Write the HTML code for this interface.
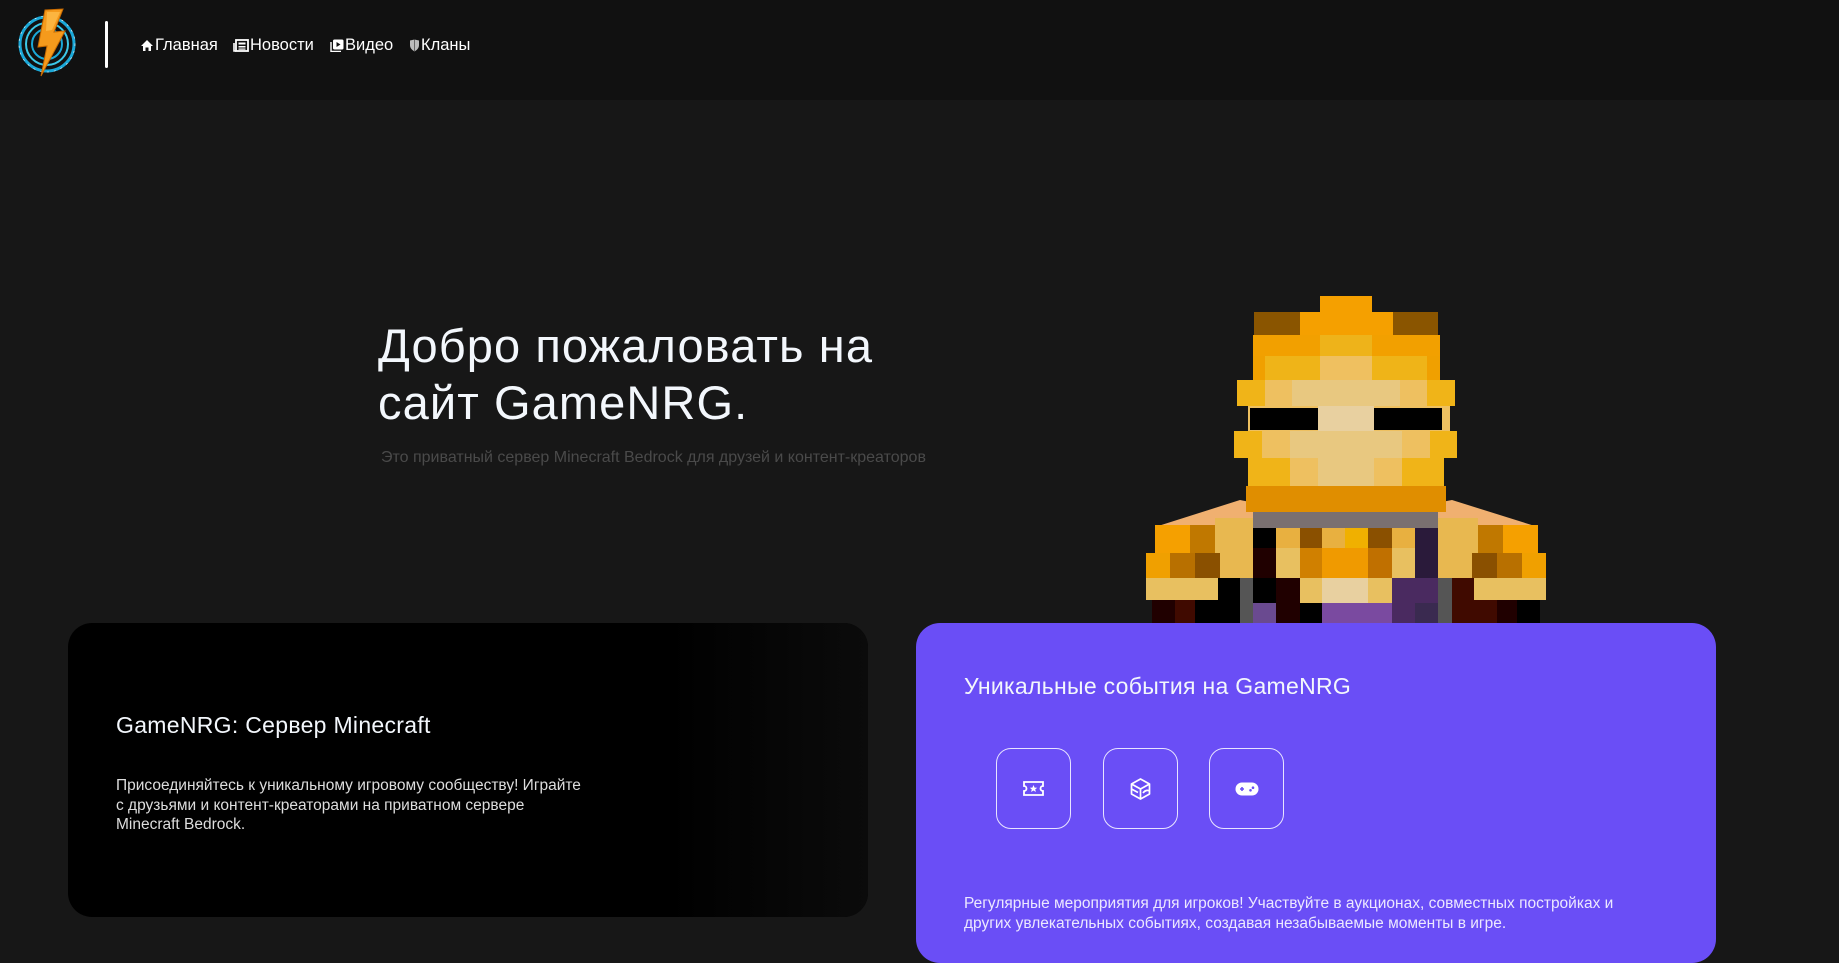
<!DOCTYPE html>
<html><head><meta charset="utf-8">
<style>
*{margin:0;padding:0;box-sizing:border-box}
html,body{width:1839px;height:945px;overflow:hidden;background:#171717;font-family:"Liberation Sans",Arial,sans-serif;color:#fff}
.hdr{position:absolute;left:0;top:0;width:1839px;height:100px;background:#111}
.div{position:absolute;left:105px;top:21px;width:3px;height:47px;background:#fff;border-radius:2px}
.nav{position:absolute;top:36px;font-size:16.5px;font-weight:500;display:flex;align-items:center;color:#fff}
.nav svg{margin-right:1px}
h1{position:absolute;left:378px;top:317px;font-size:47px;font-weight:500;line-height:57px;color:#f3f7fc;letter-spacing:1.1px}
.sub{position:absolute;left:381px;top:449px;font-size:16px;color:#4a4a4a;font-weight:300}
.card1{position:absolute;left:68px;top:623px;width:800px;height:294px;background:#000;border-radius:24px;overflow:hidden}
.card2{position:absolute;left:916px;top:623px;width:800px;height:340px;background:#6a4ef6;border-radius:24px}
.t{position:absolute;font-size:23px;font-weight:500;color:#f3f7fc;letter-spacing:0.3px}
.p{position:absolute;font-size:15.5px;line-height:19.5px;color:#ddd;font-weight:300}
.ib{position:absolute;top:125px;width:75px;height:81px;border:1.3px solid #e8e4ff;border-radius:15px;display:flex;align-items:center;justify-content:center}
</style></head><body>
<div class="hdr">
<svg style="position:absolute;left:16px;top:6px" width="66" height="72" viewBox="0 0 66 72">
<circle cx="31" cy="38" r="27" fill="none" stroke="#1aa8d8" stroke-width="3"/>
<circle cx="31" cy="38" r="21" fill="none" stroke="#3cc8e8" stroke-width="2"/>
<circle cx="31" cy="38" r="15" fill="none" stroke="#1aa8d8" stroke-width="2"/>
<circle cx="31" cy="38" r="28" fill="none" stroke="#fff" stroke-width="0.6" stroke-dasharray="2 5"/>
<path d="M29 4 L47 3 L38 26 L49 25 L25 70 L31 40 L22 41 Z" fill="#f59a1c" stroke="#c86a00" stroke-width="1"/>
<path d="M31 6 L44 6 L36 24 L30 25 Z" fill="#ffc050" opacity=".7"/>
</svg>
<div class="div"></div>
<div class="nav" style="left:140px"><svg width="14" height="13" viewBox="0 0 14 13"><path d="M7 1 L13 7 H11 V12 H8.5 V8.5 H5.5 V12 H3 V7 H1 Z" fill="#fff"/></svg>Главная</div>
<div class="nav" style="left:233px"><svg width="16" height="13" viewBox="0 0 16 13"><rect x="3" y="1" width="12" height="11" fill="none" stroke="#fff" stroke-width="1.8"/><path d="M1 4 V12 H3" fill="none" stroke="#fff" stroke-width="1.6"/><rect x="5.5" y="3.5" width="7" height="2" fill="#fff"/><rect x="5.5" y="7" width="7" height="1.5" fill="#fff"/><rect x="5.5" y="9.5" width="7" height="1.2" fill="#fff"/></svg>Новости</div>
<div class="nav" style="left:330px"><svg width="14" height="13" viewBox="0 0 14 13"><rect x="3" y="0.5" width="10.5" height="10" rx="1.5" fill="#fff"/><path d="M1 3 V12.5 H11" fill="none" stroke="#fff" stroke-width="1.4"/><path d="M6.5 3 L10.5 5.5 L6.5 8 Z" fill="#111"/></svg>Видео</div>
<div class="nav" style="left:409px"><svg width="11" height="13" viewBox="0 0 11 13"><path d="M1 1.5 L5.5 0.5 L10 1.5 V6 C10 9 8 11 5.5 12.5 C3 11 1 9 1 6 Z" fill="#bbb"/><path d="M5.5 0.5 V12.5" stroke="#666" stroke-width="1"/></svg>Кланы</div>
</div>

<h1>Добро пожаловать на<br>сайт GameNRG.</h1>
<div class="sub">Это приватный сервер Minecraft Bedrock для друзей и контент-креаторов</div>

<svg style="position:absolute;left:0;top:0" width="1839" height="945">
<polygon points="1155,527 1240,500 1290,510 1253,530" fill="#f0b070"/>
<polygon points="1538,527 1452,500 1400,510 1438,530" fill="#f0b070"/>
<rect x="1155" y="525" width="35" height="28" fill="#f5a000"/><rect x="1190" y="525" width="25" height="28" fill="#c07800"/><rect x="1215" y="518" width="38" height="35" fill="#e8b850"/>
<rect x="1146" y="553" width="24" height="25" fill="#f0a000"/><rect x="1170" y="553" width="25" height="25" fill="#b87000"/><rect x="1195" y="553" width="25" height="25" fill="#8a5000"/><rect x="1220" y="553" width="33" height="25" fill="#e8b850"/>
<rect x="1146" y="578" width="72" height="22" fill="#e8c060"/><rect x="1218" y="578" width="22" height="22" fill="#000"/><rect x="1240" y="578" width="13" height="45" fill="#555"/>
<rect x="1152" y="600" width="23" height="23" fill="#200000"/><rect x="1175" y="600" width="20" height="23" fill="#400a00"/><rect x="1195" y="600" width="45" height="23" fill="#000"/>
<rect x="1503" y="525" width="35" height="28" fill="#f5a000"/><rect x="1478" y="525" width="25" height="28" fill="#c07800"/><rect x="1438" y="518" width="40" height="35" fill="#e8b850"/>
<rect x="1522" y="553" width="24" height="25" fill="#f0a000"/><rect x="1497" y="553" width="25" height="25" fill="#b87000"/><rect x="1472" y="553" width="25" height="25" fill="#8a5000"/><rect x="1438" y="553" width="34" height="25" fill="#e8b850"/>
<rect x="1474" y="578" width="72" height="22" fill="#e8c060"/><rect x="1452" y="578" width="22" height="22" fill="#400a00"/><rect x="1438" y="578" width="14" height="45" fill="#555"/>
<rect x="1517" y="600" width="23" height="23" fill="#000"/><rect x="1497" y="600" width="20" height="23" fill="#200000"/><rect x="1452" y="600" width="45" height="23" fill="#400a00"/>
<rect x="1253" y="512" width="185" height="16" fill="#7a7070"/>
<rect x="1253" y="528" width="23" height="20" fill="#000"/><rect x="1276" y="528" width="24" height="20" fill="#e8b040"/><rect x="1300" y="528" width="22" height="20" fill="#8a5000"/><rect x="1322" y="528" width="23" height="20" fill="#e8b040"/><rect x="1345" y="528" width="23" height="20" fill="#f0b000"/><rect x="1368" y="528" width="24" height="20" fill="#8a5000"/><rect x="1392" y="528" width="23" height="20" fill="#e8b040"/><rect x="1415" y="528" width="23" height="20" fill="#2a1a3a"/>
<rect x="1253" y="548" width="23" height="30" fill="#200000"/><rect x="1276" y="548" width="24" height="30" fill="#e8c060"/><rect x="1300" y="548" width="22" height="30" fill="#d08000"/><rect x="1322" y="548" width="46" height="30" fill="#f09a00"/><rect x="1368" y="548" width="24" height="30" fill="#c07000"/><rect x="1392" y="548" width="23" height="30" fill="#e8c060"/><rect x="1415" y="548" width="23" height="30" fill="#2a1a3a"/>
<rect x="1253" y="578" width="23" height="25" fill="#000"/><rect x="1276" y="578" width="24" height="25" fill="#200000"/><rect x="1300" y="578" width="22" height="25" fill="#e8c060"/><rect x="1322" y="578" width="46" height="25" fill="#e8d0a0"/><rect x="1368" y="578" width="24" height="25" fill="#e8c060"/><rect x="1392" y="578" width="46" height="25" fill="#4a2a60"/>
<rect x="1253" y="603" width="23" height="20" fill="#6a4a90"/><rect x="1276" y="603" width="24" height="20" fill="#200000"/><rect x="1300" y="603" width="22" height="20" fill="#000"/><rect x="1322" y="603" width="70" height="20" fill="#7a4aa0"/><rect x="1392" y="603" width="23" height="20" fill="#4a2a60"/><rect x="1415" y="603" width="23" height="20" fill="#3a2a50"/>
<rect x="1320" y="296" width="52" height="18" fill="#f5a000"/>
<rect x="1254" y="312" width="46" height="23" fill="#8a5500"/><rect x="1300" y="312" width="93" height="23" fill="#f5a000"/><rect x="1393" y="312" width="45" height="23" fill="#8a5500"/>
<rect x="1253" y="335" width="187" height="21" fill="#f2a000"/><rect x="1320" y="335" width="52" height="21" fill="#eeb31a"/>
<rect x="1253" y="356" width="187" height="24" fill="#f0a000"/><rect x="1265" y="356" width="55" height="24" fill="#efb418"/><rect x="1320" y="356" width="52" height="24" fill="#efc060"/><rect x="1372" y="356" width="55" height="24" fill="#efb418"/>
<rect x="1237" y="380" width="218" height="26" fill="#f0b418"/><rect x="1265" y="380" width="27" height="26" fill="#eec060"/><rect x="1292" y="380" width="108" height="26" fill="#e8c880"/><rect x="1400" y="380" width="27" height="26" fill="#eec060"/>
<rect x="1248" y="406" width="202" height="25" fill="#eec060"/><rect x="1318" y="406" width="56" height="25" fill="#e8d0a0"/>
<rect x="1250" y="408" width="68" height="22" fill="#000"/><rect x="1374" y="408" width="68" height="22" fill="#000"/>
<rect x="1234" y="431" width="223" height="27" fill="#f0b418"/><rect x="1262" y="431" width="28" height="27" fill="#eec060"/><rect x="1290" y="431" width="112" height="27" fill="#e8c880"/><rect x="1402" y="431" width="28" height="27" fill="#eec060"/>
<rect x="1248" y="458" width="196" height="28" fill="#f0b418"/><rect x="1290" y="458" width="28" height="28" fill="#eec060"/><rect x="1318" y="458" width="56" height="28" fill="#e8c880"/><rect x="1374" y="458" width="28" height="28" fill="#eec060"/>
<rect x="1246" y="486" width="200" height="26" fill="#e08e00"/>
</svg>

<div class="card1">
<div style="position:absolute;right:0;top:0;width:200px;height:294px;background:linear-gradient(90deg,#000,#0b0b0b)"></div>
<div class="t" style="left:48px;top:89px">GameNRG: Сервер Minecraft</div>
<div class="p" style="left:48px;top:153px;width:474px">Присоединяйтесь к уникальному игровому сообществу! Играйте с друзьями и контент-креаторами на приватном сервере Minecraft Bedrock.</div>
</div>

<div class="card2">
<div class="t" style="left:48px;top:50px">Уникальные события на GameNRG</div>
<div class="ib" style="left:80px"><svg width="21" height="15" viewBox="0 0 21 15"><path d="M1 1 H20 V5 A2.5 2.5 0 0 0 20 10 V14 H1 V10 A2.5 2.5 0 0 0 1 5 Z" fill="none" stroke="#fff" stroke-width="1.8"/><path d="M10.5 4 L11.6 6.6 L14.3 6.7 L12.2 8.4 L12.9 11 L10.5 9.5 L8.1 11 L8.8 8.4 L6.7 6.7 L9.4 6.6 Z" fill="#fff"/></svg></div>
<div class="ib" style="left:187px"><svg width="21" height="22" viewBox="0 0 21 22"><path d="M10.5 1 L19.5 6 V16 L10.5 21 L1.5 16 V6 Z M1.5 6 L10.5 11 L19.5 6 M10.5 11 V21 M1.5 11 L8 14.5 M13 15 C15 12 18 12 19.5 13" fill="none" stroke="#fff" stroke-width="1.7" stroke-linejoin="round"/></svg></div>
<div class="ib" style="left:293px"><svg width="24" height="14" viewBox="0 0 24 14"><rect x="0.5" y="0.5" width="23" height="13" rx="6.5" fill="#fff"/><path d="M5 7 H9 M7 5 V9" stroke="#6a4ef6" stroke-width="1.6"/><circle cx="15.5" cy="8.3" r="1.3" fill="#6a4ef6"/><circle cx="18" cy="5.7" r="1.3" fill="#6a4ef6"/></svg></div>
<div class="p" style="left:48px;top:271px;width:690px;color:#ece8ff">Регулярные мероприятия для игроков! Участвуйте в аукционах, совместных постройках и других увлекательных событиях, создавая незабываемые моменты в игре.</div>
</div>
</body></html>
